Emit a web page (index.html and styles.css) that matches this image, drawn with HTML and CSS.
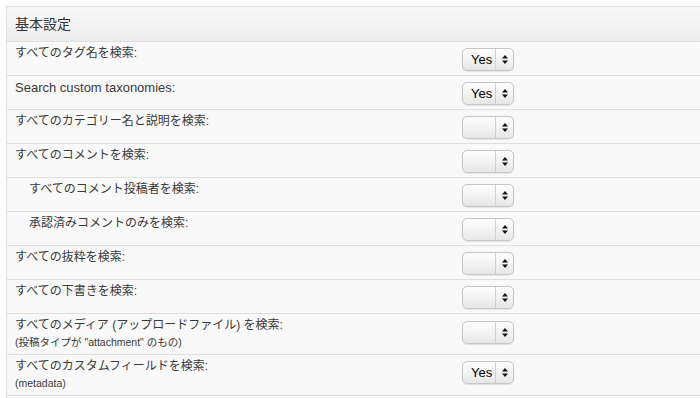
FILE: index.html
```html
<!DOCTYPE html>
<html lang="ja">
<head>
  <meta charset="UTF-8" />
  <title>基本設定</title>
  <link rel="stylesheet" href="styles.css">
</head>
<body>

<div class="settings">
  <div class="settings-head">基本設定</div>

  <div class="row">
    <div class="label">すべてのタグ名を検索:</div>
    <div class="control"><span class="picker"><span class="value">Yes</span><span class="arrows"><svg width="6" height="9" viewBox="0 0 6 9"><path d="M0 3.5 3 0 6 3.5Z M0 5.5 3 9 6 5.5Z"/></svg></span></span></div>
  </div>

  <div class="row">
    <div class="label latin">Search custom taxonomies:</div>
    <div class="control"><span class="picker"><span class="value">Yes</span><span class="arrows"><svg width="6" height="9" viewBox="0 0 6 9"><path d="M0 3.5 3 0 6 3.5Z M0 5.5 3 9 6 5.5Z"/></svg></span></span></div>
  </div>

  <div class="row">
    <div class="label">すべてのカテゴリー名と説明を検索:</div>
    <div class="control"><span class="picker"><span class="value"></span><span class="arrows"><svg width="6" height="9" viewBox="0 0 6 9"><path d="M0 3.5 3 0 6 3.5Z M0 5.5 3 9 6 5.5Z"/></svg></span></span></div>
  </div>

  <div class="row">
    <div class="label">すべてのコメントを検索:</div>
    <div class="control"><span class="picker"><span class="value"></span><span class="arrows"><svg width="6" height="9" viewBox="0 0 6 9"><path d="M0 3.5 3 0 6 3.5Z M0 5.5 3 9 6 5.5Z"/></svg></span></span></div>
  </div>

  <div class="row">
    <div class="label sub">すべてのコメント投稿者を検索:</div>
    <div class="control"><span class="picker"><span class="value"></span><span class="arrows"><svg width="6" height="9" viewBox="0 0 6 9"><path d="M0 3.5 3 0 6 3.5Z M0 5.5 3 9 6 5.5Z"/></svg></span></span></div>
  </div>

  <div class="row">
    <div class="label sub">承認済みコメントのみを検索:</div>
    <div class="control"><span class="picker"><span class="value"></span><span class="arrows"><svg width="6" height="9" viewBox="0 0 6 9"><path d="M0 3.5 3 0 6 3.5Z M0 5.5 3 9 6 5.5Z"/></svg></span></span></div>
  </div>

  <div class="row">
    <div class="label">すべての抜粋を検索:</div>
    <div class="control"><span class="picker"><span class="value"></span><span class="arrows"><svg width="6" height="9" viewBox="0 0 6 9"><path d="M0 3.5 3 0 6 3.5Z M0 5.5 3 9 6 5.5Z"/></svg></span></span></div>
  </div>

  <div class="row">
    <div class="label">すべての下書きを検索:</div>
    <div class="control"><span class="picker"><span class="value"></span><span class="arrows"><svg width="6" height="9" viewBox="0 0 6 9"><path d="M0 3.5 3 0 6 3.5Z M0 5.5 3 9 6 5.5Z"/></svg></span></span></div>
  </div>

  <div class="row">
    <div class="label">すべてのメディア (アップロードファイル) を検索:<small>(投稿タイプが "attachment" のもの)</small></div>
    <div class="control tall"><span class="picker"><span class="value"></span><span class="arrows"><svg width="6" height="9" viewBox="0 0 6 9"><path d="M0 3.5 3 0 6 3.5Z M0 5.5 3 9 6 5.5Z"/></svg></span></span></div>
  </div>

  <div class="row">
    <div class="label">すべてのカスタムフィールドを検索:<small>(metadata)</small></div>
    <div class="control"><span class="picker"><span class="value">Yes</span><span class="arrows"><svg width="6" height="9" viewBox="0 0 6 9"><path d="M0 3.5 3 0 6 3.5Z M0 5.5 3 9 6 5.5Z"/></svg></span></span></div>
  </div>
</div>

</body>
</html>
```

FILE: styles.css
```css
html, body {
  overflow: hidden;
}
body {
  margin: 0;
  padding: 6px 0 0 6px;
  background: #fff;
  font-family: "Liberation Sans", "Noto Sans CJK JP", sans-serif;
  font-size: 12px;
  color: #3a3a3a;
}
/* panel runs on past the right edge of the frame, so no right border */
.settings {
  background: #f9f9f9;
  border: 1px solid #dfdfdf;
  border-right: none;
  padding-bottom: 10px;
}
.settings-head {
  height: 34px;
  line-height: 34px;
  padding-left: 8px;
  font-size: 14px;
  color: #333;
  background: linear-gradient(#f9f9f9, #ececec);
  border-bottom: 1px solid #dfdfdf;
}
.row {
  display: flex;
  border-bottom: 1px solid #dfdfdf;
}
.label {
  width: 447px;
  padding: 3px 0 4px 8px;
  line-height: 17px;
}
.label.latin {
  font-size: 13px;
}
.label.sub {
  width: 433px;
  padding-left: 22px;
}
.label small {
  display: block;
  font-size: 10.5px;
  line-height: 16px;
}
.control {
  padding: 6px 0 4px;
}
.control.tall {
  padding-top: 7px;
}
.picker {
  display: flex;
  width: 52px;
  height: 23px;
  box-sizing: border-box;
  border: 1px solid #c6c6c6;
  border-radius: 5px;
  background: linear-gradient(#fdfdfd, #f1f1f1 60%, #e6e6e6);
  box-shadow: 0 1px 1px rgba(0, 0, 0, 0.08);
}
.value {
  width: 33px;
  box-sizing: border-box;
  padding-left: 8px;
  line-height: 21px;
  font-size: 13px;
  color: #000;
  border-right: 1px solid #cfcfcf;
}
.arrows {
  flex: 1;
  display: flex;
  align-items: center;
  justify-content: center;
}
.arrows svg {
  fill: #111;
}
```
